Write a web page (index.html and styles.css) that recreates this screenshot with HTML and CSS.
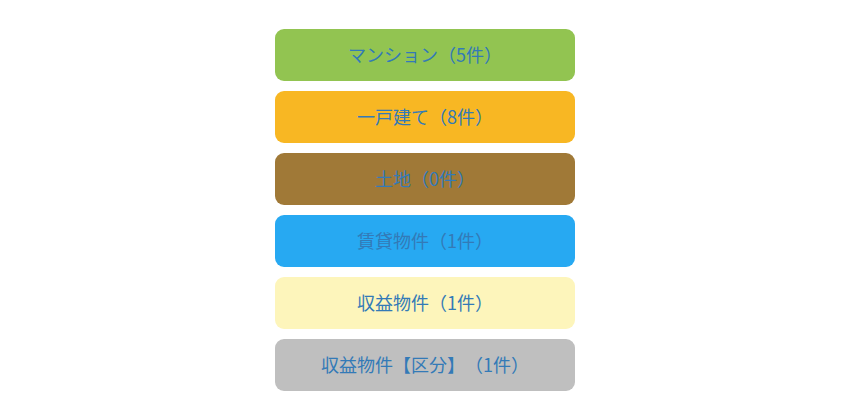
FILE: index.html
```html
<!DOCTYPE html>
<html>
<head>
    <title>物件種別</title>
    <link rel="stylesheet" href="styles.css">
</head>
<body>
<ul class="types">
    <li><a class="type mansion" href="#">マンション（5件）</a></li>
    <li><a class="type house" href="#">一戸建て（8件）</a></li>
    <li><a class="type land" href="#">土地（0件）</a></li>
    <li><a class="type rent" href="#">賃貸物件（1件）</a></li>
    <li><a class="type income" href="#">収益物件（1件）</a></li>
    <li><a class="type income-unit" href="#">収益物件【区分】（1件）</a></li>
</ul>
</body>
</html>
```

FILE: styles.css
```css
html, body {
    padding: 0px;
    margin: 0px;
    background-color: #FFF;
}

.types {
    list-style-type: none;
    width: 300px;
    margin: 29px 0px 0px 275px;
    padding: 0px;
    display: flex;
    flex-direction: column;
    gap: 10px;
}

.type {
    display: flex;
    align-items: center;
    justify-content: center;
    height: 52px;
    padding-bottom: 2px;
    box-sizing: border-box;
    border-radius: 9px;
    color: #337ab7;
    text-decoration: none;
    font-family: "Noto Sans CJK JP", "Noto Sans", sans-serif;
    font-size: 18px;
    text-spacing-trim: space-all;
}

.mansion { background-color: #92c451; }
.house { background-color: #f8b723; }
.land { background-color: #a07937; }
.rent { background-color: #27a9f2; }
.income { background-color: #fdf5bb; }
.income-unit { background-color: #bfbfbf; }
```
